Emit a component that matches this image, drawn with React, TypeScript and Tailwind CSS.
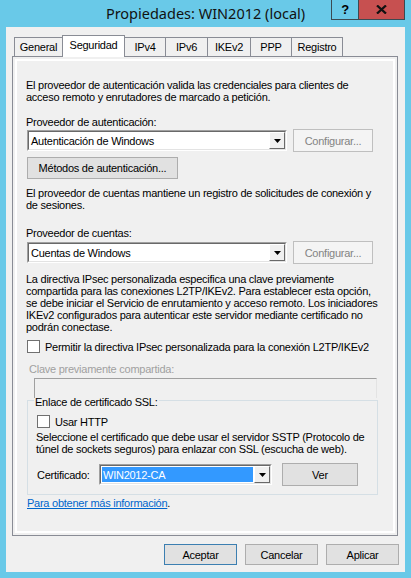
import type { ReactNode } from 'react';

const font = { fontFamily: '"Liberation Sans", Arial, sans-serif' };

function Tab({ label, width, active }: { label: string; width: number; active?: boolean }) {
  return (
    <div
      style={{ width }}
      className={
        active
          ? 'relative z-10 -mb-px -ml-px flex h-[22px] items-start justify-center border border-b-0 border-[#898c95] bg-white pt-[3px]'
          : '-ml-px flex h-[19px] items-start justify-center border border-b-0 border-[#898c95] bg-[#f0f0f0] pt-[3px]'
      }
    >
      {label}
    </div>
  );
}

function DropArrow() {
  return (
    <div className="flex h-full w-[16px] items-center justify-center border border-t-white border-l-white border-r-[#696969] border-b-[#696969] bg-[#f0f0f0]">
      <svg width="7" height="4" viewBox="0 0 7 4">
        <path d="M0 0h7L3.5 4z" fill="#000" />
      </svg>
    </div>
  );
}

function Combo({ value, width, selected }: { value: string; width: number; selected?: boolean }) {
  return (
    <div
      style={{ width }}
      className="flex h-[21px] border border-t-[#a0a0a0] border-l-[#a0a0a0] border-r-white border-b-white"
    >
      <div className="flex flex-1 border border-t-[#696969] border-l-[#696969] border-r-[#e3e3e3] border-b-[#e3e3e3] bg-white">
        <div className="flex flex-1 items-center p-[1px]">
          <span
            className={
              selected
                ? 'flex h-full flex-1 items-center bg-[#3399ff] pl-[1px] text-white'
                : 'flex h-full flex-1 items-center pl-[1px]'
            }
          >
            {value}
          </span>
        </div>
        <DropArrow />
      </div>
    </div>
  );
}

function Button({
  children,
  width,
  height = 22,
  disabled,
  primary,
}: {
  children: ReactNode;
  width: number;
  height?: number;
  disabled?: boolean;
  primary?: boolean;
}) {
  let cls = 'flex items-center justify-center border ';
  if (disabled) cls += 'border-[#bfbfbf] bg-[#f4f4f4] text-[#838383]';
  else if (primary) cls += 'border-[#3c7fb1] bg-[#e1e1e1] text-black';
  else cls += 'border-[#adadad] bg-[#e1e1e1] text-black';
  return (
    <div style={{ width, height }} className={cls}>
      {children}
    </div>
  );
}

function Checkbox({ label }: { label: string }) {
  return (
    <div className="flex h-[13px] items-center gap-[5px]">
      <div className="h-[13px] w-[13px] border border-[#707070] bg-white" />
      <span>{label}</span>
    </div>
  );
}

export default function App() {
  return (
    <div
      style={font}
      className="flex h-[578px] w-[411px] flex-col bg-[#69c9e8] text-[11px] leading-[12px] tracking-[-0.25px] whitespace-nowrap text-black"
    >
      {/* Caption */}
      <div className="flex h-[27px] shrink-0">
        <div className="w-[80px]" />
        <div
          style={{ fontFamily: '"Noto Sans", "Open Sans", sans-serif' }}
          className="flex flex-1 items-start justify-center pt-[3px] text-[14.5px] leading-[20px] tracking-normal text-[#111]"
        >
          Propiedades: WIN2012 (local)
        </div>
        <div className="flex w-[80px] items-start">
          <div className="flex h-[20px] w-[28px] items-center justify-center border border-t-0 border-[#3b4a52] text-[13px] font-bold">
            ?
          </div>
          <div className="flex h-[20px] w-[46px] items-center justify-center border border-t-0 border-l-0 border-[#3b4a52] bg-[#c75050]">
            <svg width="11" height="9" viewBox="0 0 11 9">
              <path d="M1 0.5l9 8M10 0.5l-9 8" stroke="#111" strokeWidth="2.3" />
            </svg>
          </div>
        </div>
      </div>

      {/* Client area */}
      <div className="mx-[6px] mb-[6px] flex flex-1 flex-col bg-[#f0f0f0] px-[6px] pt-[8px]">
        <div className="flex h-[21px] items-end pl-[3px]">
          <Tab label="General" width={49} />
          <Tab label="Seguridad" width={63} active />
          <Tab label="IPv4" width={42} />
          <Tab label="IPv6" width={43} />
          <Tab label="IKEv2" width={44} />
          <Tab label="PPP" width={42} />
          <Tab label="Registro" width={52} />
        </div>

        <div className="h-[480px] w-[386px] border border-[#898c95] p-[2px]">
          <div className="h-full border-2 border-white pl-[9px] pt-[18px]">
            <p>
              El proveedor de autenticación valida las credenciales para clientes de
              <br />
              acceso remoto y enrutadores de marcado a petición.
            </p>

            <p className="mt-[13px]">Proveedor de autenticación:</p>
            <div className="mt-[1px] ml-[1px] flex h-[23px] items-center gap-[6px]">
              <Combo value="Autenticación de Windows" width={260} />
              <Button width={80} height={23} disabled>
                Configurar...
              </Button>
            </div>
            <div className="mt-[5px] ml-[1px]">
              <Button width={151}>Métodos de autenticación...</Button>
            </div>

            <p className="mt-[8px]">
              El proveedor de cuentas mantiene un registro de solicitudes de conexión y
              <br />
              de sesiones.
            </p>

            <p className="mt-[16px]">Proveedor de cuentas:</p>
            <div className="mt-[2px] ml-[1px] flex h-[23px] items-center gap-[6px]">
              <Combo value="Cuentas de Windows" width={260} />
              <Button width={80} height={23} disabled>
                Configurar...
              </Button>
            </div>

            <p className="mt-[9px]">
              La directiva IPsec personalizada especifica una clave previamente
              <br />
              compartida para las conexiones L2TP/IKEv2. Para establecer esta opción,
              <br />
              se debe iniciar el Servicio de enrutamiento y acceso remoto. Los iniciadores
              <br />
              IKEv2 configurados para autenticar este servidor mediante certificado no
              <br />
              podrán conectase.
            </p>

            <div className="mt-[7px] ml-[1px]">
              <Checkbox label="Permitir la directiva IPsec personalizada para la conexión L2TP/IKEv2" />
            </div>

            <p className="mt-[10px] ml-[3px] text-[#a0a0a0]">Clave previamente compartida:</p>
            <div className="mt-[3px] ml-[8px] h-[20px] w-[343px] border border-b-0 border-t-[#a0a0a0] border-l-[#a0a0a0] border-r-[#e3e3e3]" />

            {/* SSL certificate binding group */}
            <fieldset className="-mt-[6px] ml-[1px] w-[351px] border border-[#d5dfe5] pb-[8px] pl-[9px]">
              <legend className="-ml-[3px] px-[1px] pt-[4px]">Enlace de certificado SSL:</legend>
              <div className="mt-[7px]">
                <Checkbox label="Usar HTTP" />
              </div>
              <p className="mt-[3px] -ml-px">
                Seleccione el certificado que debe usar el servidor SSTP (Protocolo de
                <br />
                túnel de sockets seguros) para enlazar con SSL (escucha de web).
              </p>
              <div className="mt-[8px] flex h-[23px] items-center">
                <span className="w-[62px]">Certificado:</span>
                <Combo value="WIN2012-CA" width={173} selected />
                <div className="ml-[10px]">
                  <Button width={76} height={23}>
                    Ver
                  </Button>
                </div>
              </div>
            </fieldset>

            <p className="mt-[2px] ml-[1px]">
              <span className="text-[#0066cc] underline">Para obtener más información</span>.
            </p>
          </div>
        </div>

        <div className="mt-[8px] flex justify-end gap-[8px]">
          <Button width={73} height={21} primary>
            Aceptar
          </Button>
          <Button width={73} height={21}>
            Cancelar
          </Button>
          <Button width={73} height={21}>
            Aplicar
          </Button>
        </div>
      </div>
    </div>
  );
}
